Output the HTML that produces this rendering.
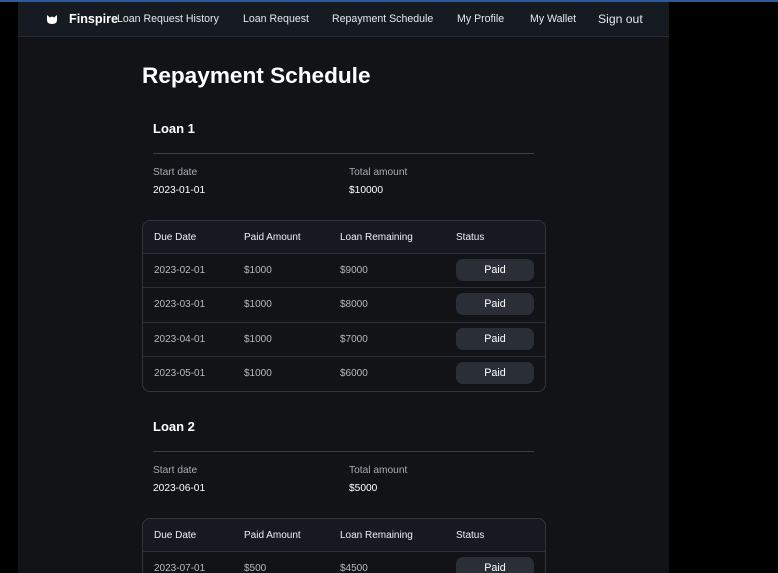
<!DOCTYPE html>
<html><head><style>
*{margin:0;padding:0;box-sizing:border-box}
html,body{width:778px;height:573px;overflow:hidden}
body{background:#000;font-family:"Liberation Sans",sans-serif;color:#e6e8ea;position:relative}
.top{position:absolute;left:0;top:0;width:778px;height:2px;background:#2d5a9a}
.page{position:absolute;left:18px;top:2px;width:651px;height:571px;background:#111317;overflow:hidden}
.nav{position:absolute;left:0;top:0;width:651px;height:35px;background:#161b22;border-bottom:1px solid #252c36}
.nav span{position:absolute;top:11px;font-size:10.6px;color:#e6e8ea;white-space:nowrap}
.a{position:absolute;white-space:nowrap}
h1{position:absolute;left:124px;top:61px;font-size:22.6px;font-weight:bold;color:#fff}
.lt{font-size:13px;font-weight:bold;color:#fff}
.hr{position:absolute;height:1px;background:#3a4049}
.lbl{font-size:10.2px;color:#a7adb5}
.val{font-size:10.2px;color:#fff}
.tbl{position:absolute;left:124px;width:404px;border:1px solid #30363f;border-radius:8px;overflow:hidden}
.row{position:relative;height:34.4px;border-top:1px solid #2b313a;font-size:10px;color:#b5bac1}
.row.h{border-top:none;height:32px;background:#161a20;color:#eef0f2}
.row span{position:absolute;top:11px;white-space:nowrap}
.row.h span{top:11px}
.b{position:absolute;left:313px;top:5px;width:78px;height:22px;border-radius:7px;background:#2a2f37;color:#fff;text-align:center;line-height:22px;font-size:10.8px}
</style></head><body>
<div class="top"></div>
<div class="page">
<div class="nav">
<svg style="position:absolute;left:28px;top:11px" width="12" height="12" viewBox="0 0 12 12"><path d="M1 2 L4 4.5 L6 3.5 L8 4.5 L11 2 L11 7 Q11 11 6 11 Q1 11 1 7 Z" fill="#fff"/></svg>
<span style="left:51px;top:10px;font-size:12.6px;font-weight:bold;color:#fff">Finspire</span>
<span style="left:99px">Loan Request History</span>
<span style="left:225px">Loan Request</span>
<span style="left:314px">Repayment Schedule</span>
<span style="left:439px">My Profile</span>
<span style="left:512px">My Wallet</span>
<span style="left:580px;top:10px;font-size:12.2px">Sign out</span>
</div>
<h1>Repayment Schedule</h1>

<div class="a lt" style="left:135px;top:119px">Loan 1</div>
<div class="hr" style="left:135px;top:151px;width:381px"></div>
<div class="a lbl" style="left:135px;top:165px">Start date</div>
<div class="a val" style="left:135px;top:183px">2023-01-01</div>
<div class="a lbl" style="left:331px;top:165px">Total amount</div>
<div class="a val" style="left:331px;top:183px">$10000</div>
<div class="tbl" style="top:218px">
<div class="row h"><span style="left:11px">Due Date</span><span style="left:101px">Paid Amount</span><span style="left:197px">Loan Remaining</span><span style="left:313px">Status</span></div>
<div class="row"><span style="left:11px">2023-02-01</span><span style="left:101px">$1000</span><span style="left:197px">$9000</span><div class="b">Paid</div></div>
<div class="row"><span style="left:11px">2023-03-01</span><span style="left:101px">$1000</span><span style="left:197px">$8000</span><div class="b">Paid</div></div>
<div class="row"><span style="left:11px">2023-04-01</span><span style="left:101px">$1000</span><span style="left:197px">$7000</span><div class="b">Paid</div></div>
<div class="row"><span style="left:11px">2023-05-01</span><span style="left:101px">$1000</span><span style="left:197px">$6000</span><div class="b">Paid</div></div>
</div>

<div class="a lt" style="left:135px;top:417px">Loan 2</div>
<div class="hr" style="left:135px;top:449px;width:381px"></div>
<div class="a lbl" style="left:135px;top:463px">Start date</div>
<div class="a val" style="left:135px;top:481px">2023-06-01</div>
<div class="a lbl" style="left:331px;top:463px">Total amount</div>
<div class="a val" style="left:331px;top:481px">$5000</div>
<div class="tbl" style="top:516px">
<div class="row h"><span style="left:11px">Due Date</span><span style="left:101px">Paid Amount</span><span style="left:197px">Loan Remaining</span><span style="left:313px">Status</span></div>
<div class="row"><span style="left:11px">2023-07-01</span><span style="left:101px">$500</span><span style="left:197px">$4500</span><div class="b">Paid</div></div>
</div>
</div>
</body></html>
